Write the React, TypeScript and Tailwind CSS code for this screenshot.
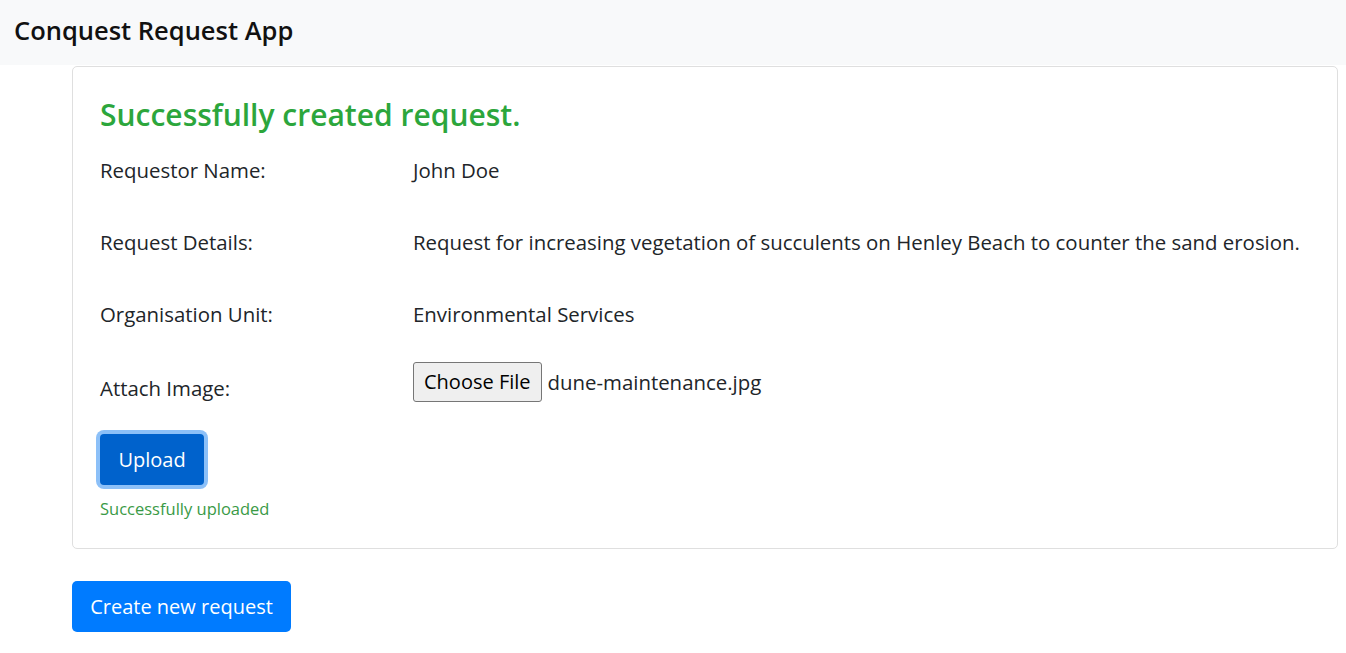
export default function App() {
  const rows = [
    { label: "Requestor Name:", value: "John Doe" },
    {
      label: "Request Details:",
      value:
        "Request for increasing vegetation of succulents on Henley Beach to counter the sand erosion.",
    },
    { label: "Organisation Unit:", value: "Environmental Services" },
  ];

  return (
    <div className="min-h-screen bg-white text-[#212529] font-['Open_Sans','Liberation_Sans',sans-serif]">
      {/* Navbar */}
      <nav className="h-[65px] bg-[#f8f9fa] flex items-center px-[14px] pb-[5px]">
        <span className="text-[25.5px] font-semibold text-[#111]">Conquest Request App</span>
      </nav>

      <main className="pl-[72px] pr-[8px] pt-[1px]">
        {/* Card */}
        <div className="border border-[#dfdfdf] rounded-[5px] px-[27px] pt-[28px] pb-[27px]">
          <h2 className="text-[30px] leading-[40px] font-semibold text-[#2ca63c]">
            Successfully created request.
          </h2>

          {rows.map((r) => (
            <div key={r.label} className="flex items-start text-[20.4px] leading-[30px]">
              <div className="w-[313px] shrink-0 pt-[20px] pb-[22px]">{r.label}</div>
              <div className="pt-[20px] pb-[22px]">{r.value}</div>
            </div>
          ))}

          <div className="flex items-start text-[20.4px] leading-[30px]">
            <div className="w-[313px] shrink-0 pt-[22px] pb-[20px]">Attach Image:</div>
            <div className="pt-[11px] flex items-center gap-[6px]">
              <span className="h-[40px] px-[10px] flex items-center bg-[#efefef] border border-[#767676] rounded-[3px] text-black text-[20px]">
                Choose File
              </span>
              <span>dune-maintenance.jpg</span>
            </div>
          </div>

          <button className="mt-[11px] w-[104px] h-[51px] rounded-[4px] bg-[#0062cc] text-white text-[20px] ring-4 ring-[#8cc0f8]">
            Upload
          </button>

          <p className="mt-[12px] text-[16.5px] leading-[24px] text-[#3a9a46]">Successfully uploaded</p>
        </div>

        <button className="mt-[32px] w-[219px] h-[51px] rounded-[5px] bg-[#007bff] text-white text-[20px]">
          Create new request
        </button>
      </main>
    </div>
  );
}
